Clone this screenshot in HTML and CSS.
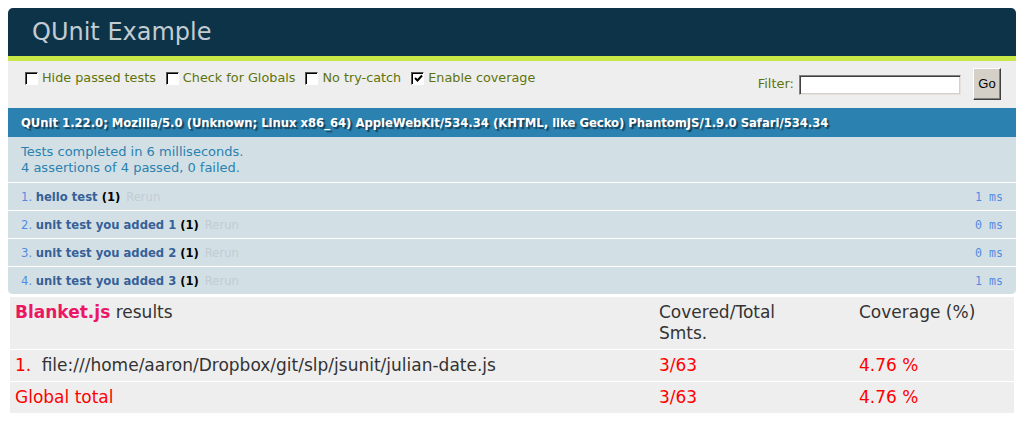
FILE: index.html
```html
<!DOCTYPE html>
<html>
<head>
<meta charset="utf-8">
<title>QUnit Example</title>
<link rel="stylesheet" href="styles.css">
</head>
<body>
<h1 class="q-header">QUnit Example</h1>
<div class="q-banner"></div>
<div class="q-toolbar">
  <div class="q-configs">
    <label class="q-config"><span class="cb"></span>Hide passed tests</label>
    <label class="q-config"><span class="cb"></span>Check for Globals</label>
    <label class="q-config"><span class="cb"></span>No try-catch</label>
    <label class="q-config"><span class="cb"><svg width="9" height="9" viewBox="0 0 9 9"><path d="M1 4 L3.5 6.5 L8 1.5" fill="none" stroke="#000" stroke-width="2"/></svg></span>Enable coverage</label>
  </div>
  <div class="q-filter">
    <span class="q-filter-label">Filter:</span>
    <span class="q-input"></span>
    <span class="q-go">Go</span>
  </div>
</div>
<div class="q-useragent">QUnit 1.22.0; Mozilla/5.0 (Unknown; Linux x86_64) AppleWebKit/534.34 (KHTML, like Gecko) PhantomJS/1.9.0 Safari/534.34</div>
<div class="q-result">Tests completed in 6 milliseconds.<br>4 assertions of 4 passed, 0 failed.</div>
<ol class="q-tests">
  <li><strong><span class="t-name">hello test</span> <b class="counts">(1)</b></strong><a class="rerun">Rerun</a><span class="runtime">1 ms</span></li>
  <li><strong><span class="t-name">unit test you added 1</span> <b class="counts">(1)</b></strong><a class="rerun">Rerun</a><span class="runtime">0 ms</span></li>
  <li><strong><span class="t-name">unit test you added 2</span> <b class="counts">(1)</b></strong><a class="rerun">Rerun</a><span class="runtime">0 ms</span></li>
  <li><strong><span class="t-name">unit test you added 3</span> <b class="counts">(1)</b></strong><a class="rerun">Rerun</a><span class="runtime">1 ms</span></li>
</ol>
<div class="bl-main">
  <div class="bl-row">
    <div class="bl-file"><span class="bl-logo">Blanket.js</span> results</div>
    <div class="bl-rs">Covered/Total Smts.</div>
    <div class="bl-rs">Coverage (%)</div>
  </div>
  <div class="bl-row">
    <div class="bl-file"><span class="bl-err bl-nb">1.</span> file:///home/aaron/Dropbox/git/slp/jsunit/julian-date.js</div>
    <div class="bl-rs bl-err">3/63</div>
    <div class="bl-rs bl-err">4.76 %</div>
  </div>
  <div class="bl-row">
    <div class="bl-file bl-err">Global total</div>
    <div class="bl-rs bl-err">3/63</div>
    <div class="bl-rs bl-err">4.76 %</div>
  </div>
</div>
</body>
</html>
```

FILE: styles.css
```css
body {
  margin: 8px;
  font-family: "DejaVu Sans", sans-serif;
  background: #fff;
}

.q-header {
  margin: 0;
  padding: 12px 0 12px 24px;
  font-size: 24px;
  line-height: 24px;
  font-weight: 400;
  color: #C2CCD1;
  background-color: #0D3349;
  border-radius: 5px 5px 0 0;
}

.q-banner {
  height: 5px;
  background-color: #C6E746;
}

.q-toolbar {
  box-sizing: border-box;
  height: 47px;
  padding: 6px 13px 0 13px;
  background-color: #EEE;
  color: #5E740B;
  font-size: 12.8px;
  line-height: 16px;
  display: flex;
  justify-content: space-between;
  align-items: flex-start;
}

.q-configs {
  display: flex;
  padding-top: 3px;
}

.q-config {
  display: flex;
  align-items: center;
  margin-right: 6px;
}

.cb {
  box-sizing: border-box;
  width: 13px;
  height: 13px;
  margin: 0 4px 0 4px;
  background: #fff;
  border-top: 1px solid #555;
  border-left: 1px solid #555;
  border-right: 1px solid #fff;
  border-bottom: 1px solid #fff;
  box-shadow: inset 1px 1px 0 #000;
  display: flex;
  align-items: center;
  justify-content: center;
}

.cb svg {
  display: block;
  margin: 1px 0 0 1px;
}

.q-filter {
  display: flex;
  align-items: center;
  margin-top: 1px;
  margin-right: 2px;
  font-size: 13px;
}

.q-filter-label {
  margin-right: 5px;
}

.q-input {
  box-sizing: border-box;
  width: 162px;
  height: 20px;
  background: #fff;
  border-top: 1px solid #808080;
  border-left: 1px solid #808080;
  border-right: 1px solid #e4e2dc;
  border-bottom: 1px solid #e4e2dc;
  box-shadow: inset 1px 1px 0 #404040, inset -1px -1px 0 #d4d0c8;
  margin-top: 1px;
}

.q-go {
  box-sizing: border-box;
  width: 28px;
  height: 32px;
  margin-left: 12px;
  background: #d4d0c8;
  border-top: 1px solid #fff;
  border-left: 1px solid #fff;
  border-right: 1px solid #404040;
  border-bottom: 1px solid #404040;
  box-shadow: inset -1px -1px 0 #808080;
  font-family: "Liberation Sans", Arial, sans-serif;
  font-size: 13px;
  color: #000;
  display: flex;
  align-items: center;
  justify-content: center;
}

.q-useragent {
  padding: 6.5px 13px;
  background-color: #2B81AF;
  color: #FFF;
  font-size: 11.6px;
  line-height: 16px;
  font-weight: bold;
  text-shadow: rgba(0, 0, 0, 0.5) 2px 2px 1px;
}

.q-result {
  padding: 6.5px 13px;
  color: #2B81AF;
  background-color: #D2E0E6;
  border-bottom: 1px solid #FFF;
  font-size: 13px;
  line-height: 16px;
}

.q-tests {
  margin: 0;
  padding: 0;
  list-style-position: inside;
}

.q-tests li {
  padding: 5.5px 13px;
  border-bottom: 1px solid #FFF;
  font-size: 11.6px;
  line-height: 16px;
  color: #528CE0;
  background-color: #D2E0E6;
}

.q-tests li:last-child {
  border-radius: 0 0 5px 5px;
}

.t-name {
  color: #366097;
}

.counts {
  color: #000;
}

.rerun {
  padding: 0 0.5em;
  color: #C2CCD1;
}

.runtime {
  float: right;
  font-family: "DejaVu Sans Mono", monospace;
  font-size: 11.6px;
}

.bl-main {
  margin: 2px;
  background: #EEE;
  color: #333;
  font-size: 17px;
  line-height: 21px;
}

.bl-row {
  display: flex;
  padding: 5px;
  border-bottom: 1px solid #fff;
}

.bl-file {
  flex: 1;
}

.bl-rs {
  width: 150px;
  margin-left: 50px;
}

.bl-logo {
  color: #EB1764;
  font-weight: bold;
}

.bl-err {
  color: red;
}

.bl-nb {
  padding-right: 5px;
}
```
